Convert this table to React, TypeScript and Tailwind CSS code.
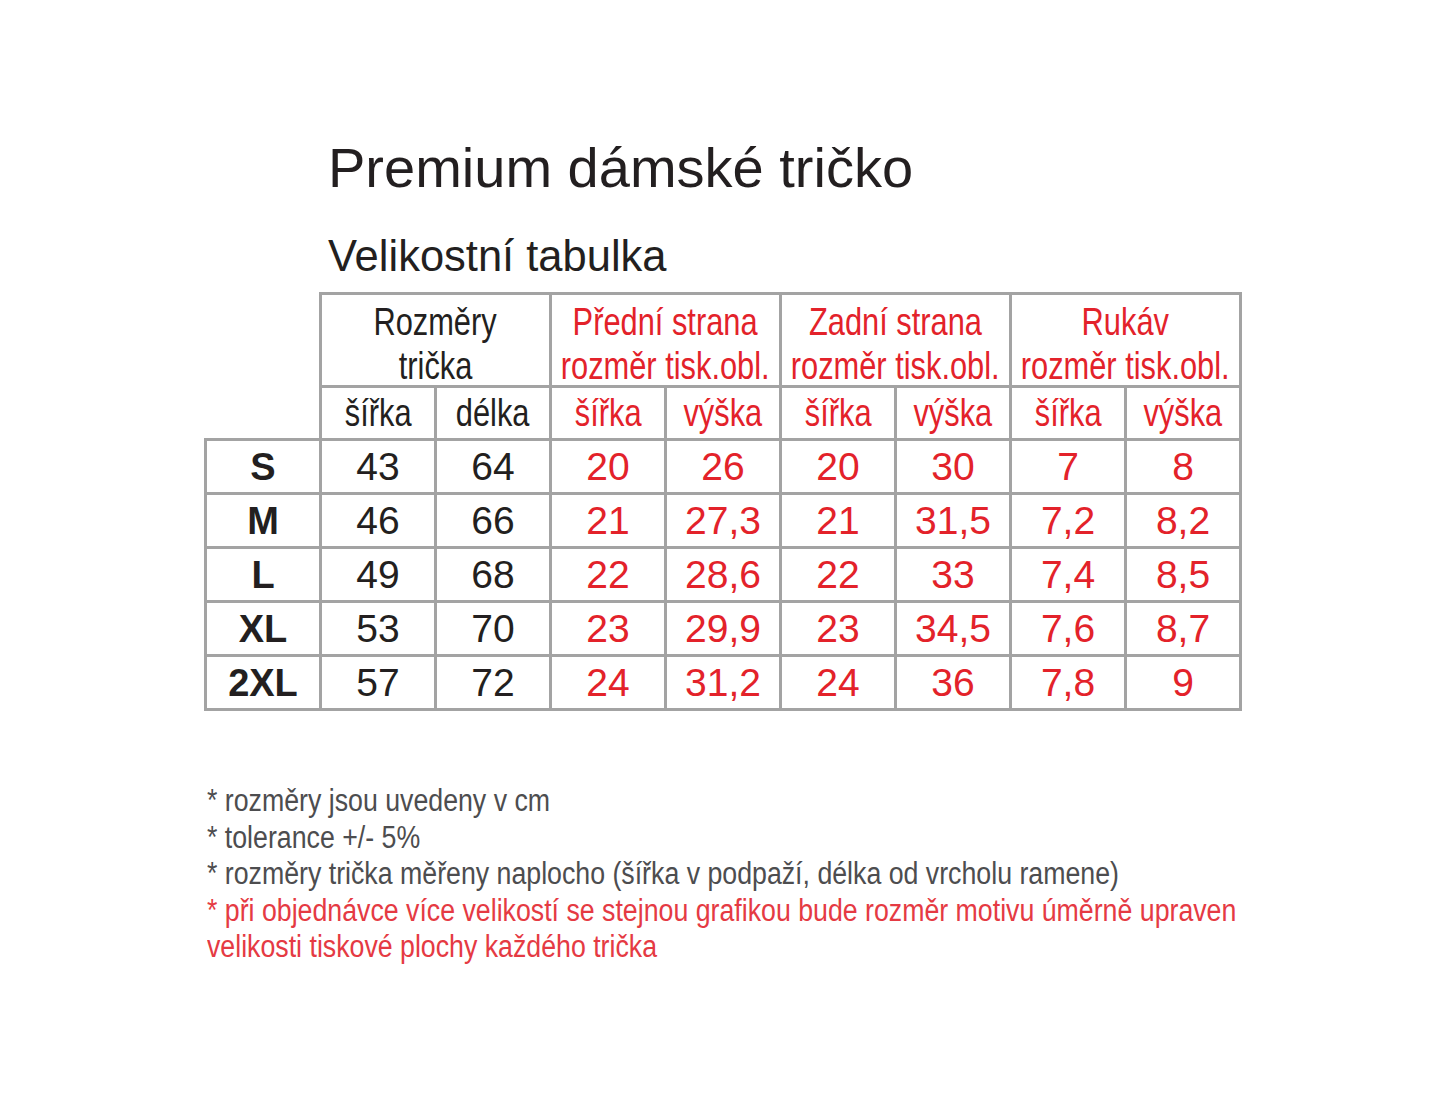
const red = "text-[#e3222a]";
const cell = "border-[3px] border-[#a3a3a3] text-center p-0";

interface Row {
  size: string;
  values: string[];
}

const rows: Row[] = [
  { size: "S", values: ["43", "64", "20", "26", "20", "30", "7", "8"] },
  { size: "M", values: ["46", "66", "21", "27,3", "21", "31,5", "7,2", "8,2"] },
  { size: "L", values: ["49", "68", "22", "28,6", "22", "33", "7,4", "8,5"] },
  { size: "XL", values: ["53", "70", "23", "29,9", "23", "34,5", "7,6", "8,7"] },
  { size: "2XL", values: ["57", "72", "24", "31,2", "24", "36", "7,8", "9"] },
];

// condensed look: Arial-width font squeezed horizontally
function Narrow({ children }: { children: string }) {
  return <span className="inline-block shrink-0 whitespace-nowrap scale-x-[0.79]">{children}</span>;
}

function GroupHeader({ top, bottom, isRed }: { top: string; bottom: string; isRed?: boolean }) {
  return (
    <th colSpan={2} className={`${cell} align-top font-normal text-[39px] leading-[44px] ${isRed ? red : "text-[#231f20]"}`}>
      <div className="flex flex-col items-center pt-[5px] -mb-[4px]">
        <Narrow>{top}</Narrow>
        <Narrow>{bottom}</Narrow>
      </div>
    </th>
  );
}

function SubHeader({ label, isRed }: { label: string; isRed?: boolean }) {
  return (
    <th className={`${cell} font-normal text-[39px] leading-[44px] h-[53px] ${isRed ? red : "text-[#231f20]"}`}>
      <div className="flex justify-center">
        <Narrow>{label}</Narrow>
      </div>
    </th>
  );
}

function Note({ text, isRed }: { text: string; isRed?: boolean }) {
  return (
    <div className={`whitespace-nowrap ${isRed ? "text-[#e53a43]" : "text-[#4d4d4f]"}`}>
      <span className="inline-block origin-left scale-x-[0.862]">{text}</span>
    </div>
  );
}

export default function App() {
  return (
    <div className="min-h-screen bg-white font-['Liberation_Sans',Arial,sans-serif] text-[#231f20]">
      <div className="pt-[132px] pl-[204px]">
        <h1 className="pl-[124px] text-[56px] leading-[72px] font-normal">Premium dámské tričko</h1>
        <h2 className="pl-[124px] mt-[27px] text-[43.5px] leading-[50px] font-normal">Velikostní tabulka</h2>

        <table className="mt-[11px] border-collapse table-fixed w-[1035px]">
          <colgroup>
            {Array.from({ length: 9 }).map((_, i) => (
              <col key={i} className="w-[115px]" />
            ))}
          </colgroup>
          <thead>
            <tr className="h-[93px]">
              <th rowSpan={2} className="border-0 p-0"></th>
              <GroupHeader top="Rozměry" bottom="trička" />
              <GroupHeader top="Přední strana" bottom="rozměr tisk.obl." isRed />
              <GroupHeader top="Zadní strana" bottom="rozměr tisk.obl." isRed />
              <GroupHeader top="Rukáv" bottom="rozměr tisk.obl." isRed />
            </tr>
            <tr>
              <SubHeader label="šířka" />
              <SubHeader label="délka" />
              <SubHeader label="šířka" isRed />
              <SubHeader label="výška" isRed />
              <SubHeader label="šířka" isRed />
              <SubHeader label="výška" isRed />
              <SubHeader label="šířka" isRed />
              <SubHeader label="výška" isRed />
            </tr>
          </thead>
          <tbody>
            {rows.map((row) => (
              <tr key={row.size} className="h-[54px]">
                <td className={`${cell} font-bold text-[38px] leading-[48px]`}>{row.size}</td>
                {row.values.map((v, i) => (
                  <td key={i} className={`${cell} text-[39px] leading-[48px] ${i < 2 ? "text-[#231f20]" : red}`}>
                    {v}
                  </td>
                ))}
              </tr>
            ))}
          </tbody>
        </table>

        <div className="mt-[72px] ml-[3px] text-[31px] leading-[36.6px]">
          <Note text="* rozměry jsou uvedeny v cm" />
          <Note text="* tolerance +/- 5%" />
          <Note text="* rozměry trička měřeny naplocho (šířka v podpaží, délka od vrcholu ramene)" />
          <Note text="* při objednávce více velikostí se stejnou grafikou bude rozměr motivu úměrně upraven" isRed />
          <Note text="velikosti tiskové plochy každého trička" isRed />
        </div>
      </div>
    </div>
  );
}
